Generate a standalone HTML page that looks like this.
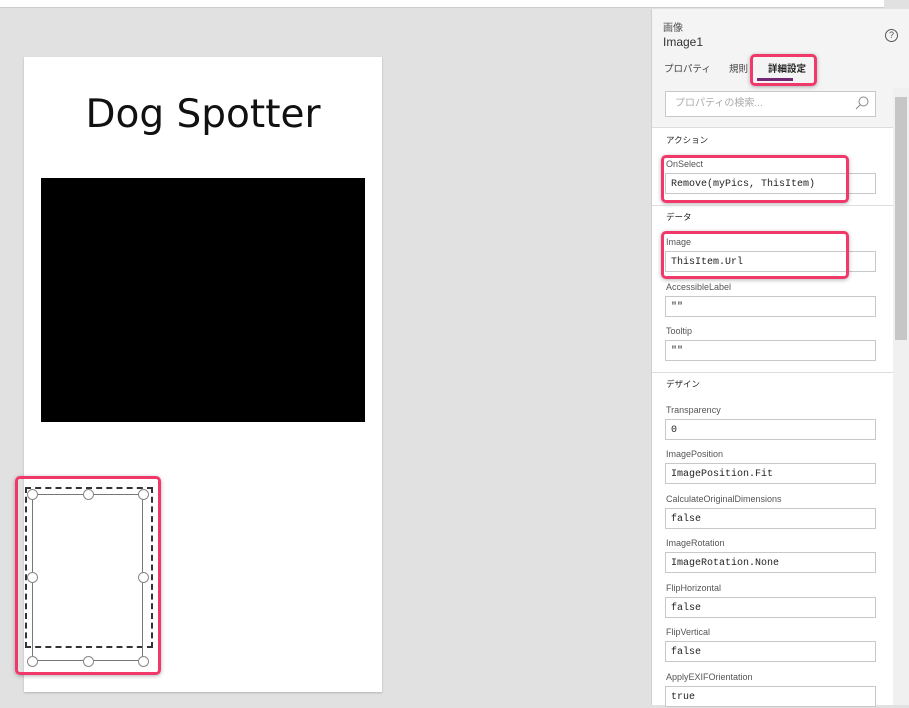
<!DOCTYPE html><html><head><style>
body{margin:0;width:909px;height:705px;overflow:hidden;background:#e1e1e1;font-family:"Liberation Sans","Noto Sans CJK JP",sans-serif;position:relative}
.a{position:absolute}
.lbl{position:absolute;left:666px;font-size:9px;color:#555}
.in{position:absolute;left:665px;height:21px;border:1px solid #c8c8c8;background:#fff;font-family:"Liberation Mono",monospace;font-size:10px;line-height:21px;padding-left:5px;box-sizing:border-box;width:211px;color:#222}
.sec{position:absolute;left:666px;font-size:8.5px;color:#222}
.hr{position:absolute;left:652px;width:241px;height:1px;background:#ddd}
.pk{position:absolute;border:3px solid #f0386b;border-radius:5px;box-shadow:0 1px 4px rgba(0,0,0,.3)}
.h{position:absolute;width:9px;height:9px;border:1px solid #888;border-radius:50%;background:#fff}
</style></head><body>
<div class="a" style="left:0;top:0;width:884px;height:7px;background:#fff;border-bottom:1px solid #ccc"></div>
<div class="a" style="left:24px;top:57px;width:358px;height:635px;background:#fff;box-shadow:0 1px 2px rgba(0,0,0,.2)"></div>
<div class="a" style="left:24px;top:92px;width:358px;text-align:center;font-family:'DejaVu Sans',sans-serif;font-size:39px;color:#111">Dog Spotter</div>
<div class="a" style="left:41px;top:178px;width:324px;height:244px;background:#000"></div>
<div class="pk" style="left:15px;top:476px;width:140px;height:193px"></div>
<div class="a" style="left:25px;top:487px;width:124px;height:157px;border:2px dashed #333"></div>
<div class="a" style="left:32px;top:494px;width:111px;height:167px;border:1px solid #777;box-sizing:border-box"></div>
<div class="h" style="left:27px;top:489px"></div><div class="h" style="left:83px;top:489px"></div><div class="h" style="left:138px;top:489px"></div>
<div class="h" style="left:27px;top:572px"></div><div class="h" style="left:138px;top:572px"></div>
<div class="h" style="left:27px;top:656px"></div><div class="h" style="left:83px;top:656px"></div><div class="h" style="left:138px;top:656px"></div>
<div class="a" style="left:651px;top:9px;width:258px;height:696px;background:#fff;border-left:1px solid #d0d0d0"></div>
<div class="a" style="left:652px;top:9px;width:257px;height:118px;background:#f4f4f4"></div>
<div class="a" style="left:663px;top:19px;font-size:10px;color:#555">画像</div>
<div class="a" style="left:663px;top:35px;font-size:12px;color:#333">Image1</div>
<div class="a" style="left:885px;top:29px;width:11px;height:11px;border:1px solid #555;border-radius:50%;font-size:9px;text-align:center;line-height:11px;color:#555">?</div>
<div class="a" style="left:664px;top:61px;font-size:9.5px;color:#444">プロパティ</div>
<div class="a" style="left:729px;top:61px;font-size:9.5px;color:#444">規則</div>
<div class="a" style="left:750px;top:54px;width:64px;height:30px;background:#f4f4f4"></div>
<div class="a" style="left:768px;top:61px;font-size:9.5px;color:#222;font-weight:bold">詳細設定</div>
<div class="a" style="left:757px;top:78px;width:36px;height:3px;background:#742774"></div>
<div class="pk" style="left:750px;top:54px;width:61px;height:26px"></div>
<div class="a" style="left:665px;top:91px;width:211px;height:26px;border:1px solid #c8c8c8;background:#fff;box-sizing:border-box;font-size:10px;color:#aaa;line-height:24px;padding-left:9px">プロパティの検索...</div>
<svg class="a" style="left:855px;top:96px" width="14" height="14"><circle cx="8.5" cy="5.5" r="4.5" fill="none" stroke="#888"/><line x1="5.5" y1="8.5" x2="1" y2="13" stroke="#888"/></svg>
<div class="a" style="left:893px;top:88px;width:16px;height:617px;background:#f0f0f0"></div>
<div class="a" style="left:895px;top:97px;width:12px;height:243px;background:#c6c6c6"></div>
<div class="hr" style="top:127px"></div>
<div class="sec" style="top:134px">アクション</div>
<div class="lbl" style="top:159px">OnSelect</div><div class="in" style="top:173px">Remove(myPics, ThisItem)</div>
<div class="pk" style="left:661px;top:155px;width:182px;height:42px"></div>
<div class="hr" style="top:205px"></div>
<div class="sec" style="top:211px">データ</div>
<div class="lbl" style="top:237px">Image</div><div class="in" style="top:251px">ThisItem.Url</div>
<div class="pk" style="left:661px;top:231px;width:182px;height:42px"></div>
<div class="lbl" style="top:282px">AccessibleLabel</div><div class="in" style="top:296px">""</div>
<div class="lbl" style="top:326px">Tooltip</div><div class="in" style="top:340px">""</div>
<div class="hr" style="top:372px"></div>
<div class="sec" style="top:378px">デザイン</div>
<div class="lbl" style="top:405px">Transparency</div><div class="in" style="top:419px">0</div>
<div class="lbl" style="top:449px">ImagePosition</div><div class="in" style="top:463px">ImagePosition.Fit</div>
<div class="lbl" style="top:494px">CalculateOriginalDimensions</div><div class="in" style="top:508px">false</div>
<div class="lbl" style="top:538px">ImageRotation</div><div class="in" style="top:552px">ImageRotation.None</div>
<div class="lbl" style="top:583px">FlipHorizontal</div><div class="in" style="top:597px">false</div>
<div class="lbl" style="top:627px">FlipVertical</div><div class="in" style="top:641px">false</div>
<div class="lbl" style="top:672px">ApplyEXIFOrientation</div><div class="in" style="top:686px">true</div>
</body></html>
